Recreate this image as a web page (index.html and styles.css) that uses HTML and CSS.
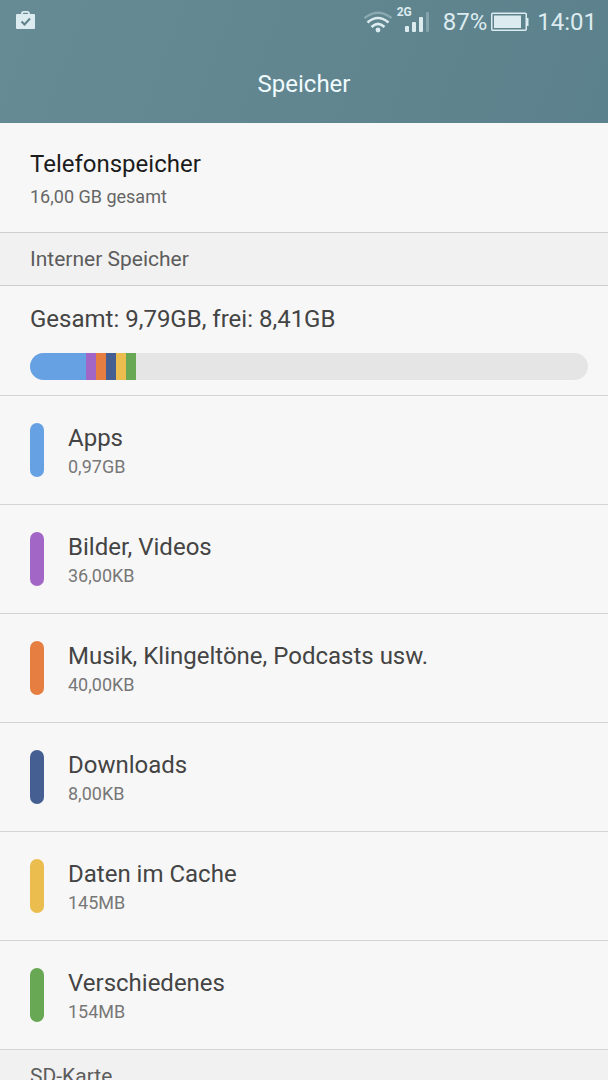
FILE: index.html
```html
<!DOCTYPE html>
<html lang="de">
<head>
    <meta charset="UTF-8">
    <meta name="viewport" content="width=device-width, initial-scale=1">
    <title>Speicher</title>
    <link rel="stylesheet" href="styles.css">
</head>
<body>
    <header class="top">
        <div class="status-bar">
            <svg class="store-icon" width="20" height="20" viewBox="0 0 20 20">
                <path d="M6 5V3.5Q6 1.8 8 1.8H11Q13 1.8 13 3.5V5" fill="none" stroke="#dcebef" stroke-width="1.8"/>
                <path d="M1 4H18Q19 4 19 5V18Q19 19 18 19H1Q0 19 0 18V5Q0 4 1 4Z" fill="#dcebef"/>
                <path d="M5.5 11.5L8.5 14.5L14 8.5" fill="none" stroke="#5f7f89" stroke-width="2"/>
            </svg>
            <div class="status-right">
                <svg class="wifi" width="30" height="22" viewBox="0 0 30 22">
                    <g fill="none" stroke="#dcebef" stroke-width="2.6">
                        <path d="M1.5 7Q15 -3.5 28.5 7" opacity="0.35"/>
                        <path d="M4.5 11.5Q15 2.5 25.5 11.5"/>
                        <path d="M8.5 16Q15 9.5 21.5 16"/>
                    </g>
                    <circle cx="15" cy="19" r="2.4" fill="#dcebef"/>
                </svg>
                <div class="signal">
                    <span class="network">2G</span>
                    <svg width="26" height="20" viewBox="0 0 26 20" fill="#dcebef">
                        <rect x="0" y="14" width="4" height="6" rx="1"/>
                        <rect x="7" y="10" width="4" height="10" rx="1"/>
                        <rect x="14" y="5" width="4" height="15" rx="1"/>
                        <rect x="21" y="0" width="3" height="20" rx="1" opacity="0.3"/>
                    </svg>
                </div>
                <span class="percent">87%</span>
                <svg class="battery" width="38" height="20" viewBox="0 0 38 20">
                    <rect x="0.75" y="1.25" width="34.5" height="17" rx="1" fill="none" stroke="#dcebef" stroke-width="1.5"/>
                    <rect x="3" y="3.5" width="27" height="12.5" fill="#dcebef"/>
                    <path d="M35.5 6H37.5V14H35.5Z" fill="#dcebef"/>
                </svg>
                <time class="clock">14:01</time>
            </div>
        </div>
        <h1>Speicher</h1>
    </header>

    <main>
        <section class="phone">
            <h2>Telefonspeicher</h2>
            <p>16,00 GB gesamt</p>
        </section>

        <h3 class="section-title">Interner Speicher</h3>
        <section class="total">
            <p>Gesamt: 9,79GB, frei: 8,41GB</p>
            <div class="usage">
                <span class="used apps" style="width: 10%"></span>
                <span class="used media"></span>
                <span class="used music"></span>
                <span class="used downloads"></span>
                <span class="used cache"></span>
                <span class="used misc"></span>
            </div>
        </section>
        <ul class="list">
            <li>
                <span class="marker apps"></span>
                <div class="info">
                    <h4>Apps</h4>
                    <p>0,97GB</p>
                </div>
            </li>
            <li>
                <span class="marker media"></span>
                <div class="info">
                    <h4>Bilder, Videos</h4>
                    <p>36,00KB</p>
                </div>
            </li>
            <li>
                <span class="marker music"></span>
                <div class="info">
                    <h4>Musik, Klingeltöne, Podcasts usw.</h4>
                    <p>40,00KB</p>
                </div>
            </li>
            <li>
                <span class="marker downloads"></span>
                <div class="info">
                    <h4>Downloads</h4>
                    <p>8,00KB</p>
                </div>
            </li>
            <li>
                <span class="marker cache"></span>
                <div class="info">
                    <h4>Daten im Cache</h4>
                    <p>145MB</p>
                </div>
            </li>
            <li>
                <span class="marker misc"></span>
                <div class="info">
                    <h4>Verschiedenes</h4>
                    <p>154MB</p>
                </div>
            </li>
        </ul>

        <h3 class="section-title">SD-Karte</h3>
    </main>
</body>
</html>
```
FILE: styles.css
```css
* {
    box-sizing: border-box;
}
body {
    margin: 0;
    font-family: Roboto, sans-serif;
    background: #f7f7f7;
    color: #444;
}
h1, h2, h3, h4, p, ul {
    margin: 0;
    padding: 0;
    font-weight: 400;
}
.top {
    height: 123px;
    background: linear-gradient(110deg, #678b94, #5b818c);
    color: #f0fbfd;
}
.status-bar {
    display: flex;
    justify-content: space-between;
    align-items: center;
    height: 44px;
    padding: 0 11px 0 16px;
    color: #dcebef;
    font-size: 24px;
}
.store-icon {
    margin-bottom: 4px;
}
.status-right {
    display: flex;
    align-items: center;
}
.signal {
    display: flex;
    align-items: center;
    margin: 0 12px 0 4px;
}
.network {
    width: 8px;
    margin-bottom: 20px;
    font-size: 12px;
    line-height: 12px;
    font-weight: 700;
}
.battery {
    margin: 0 8px 0 4px;
}
h1 {
    font-size: 24px;
    line-height: 80px;
    text-align: center;
}
.phone {
    height: 110px;
    padding: 26px 30px 0;
    border-bottom: 1px solid #cfcfcf;
}
h2 {
    font-size: 24px;
    line-height: 30px;
    color: #1c1c1c;
}
.phone p {
    margin-top: 6px;
    font-size: 18px;
    line-height: 24px;
    color: #666;
}
.section-title {
    padding: 0 30px;
    background: #f1f1f1;
    border-bottom: 1px solid #cfcfcf;
    font-size: 21px;
    line-height: 52px;
    color: #5c5c5c;
}
.total {
    padding: 18px 20px 15px 30px;
    border-bottom: 1px solid #d4d4d4;
    font-size: 24px;
    line-height: 30px;
}
.usage {
    display: flex;
    height: 27px;
    margin-top: 19px;
    border-radius: 14px;
    background: #e5e5e5;
    overflow: hidden;
}
.used {
    width: 10px;
}
.list {
    list-style: none;
}
.list li {
    display: flex;
    align-items: center;
    gap: 24px;
    height: 109px;
    padding: 0 30px;
    border-bottom: 1px solid #d4d4d4;
}
.marker {
    width: 14px;
    height: 54px;
    border-radius: 7px;
}
.info {
    padding-top: 4px;
}
h4 {
    font-size: 24px;
    line-height: 30px;
}
.list p {
    font-size: 18px;
    line-height: 28px;
    color: #777;
}
.apps {
    background: #66a1e3;
}
.media {
    background: #a267c6;
}
.music {
    background: #e67e42;
}
.downloads {
    background: #455f93;
}
.cache {
    background: #ebbd4e;
}
.misc {
    background: #68a753;
}
```
